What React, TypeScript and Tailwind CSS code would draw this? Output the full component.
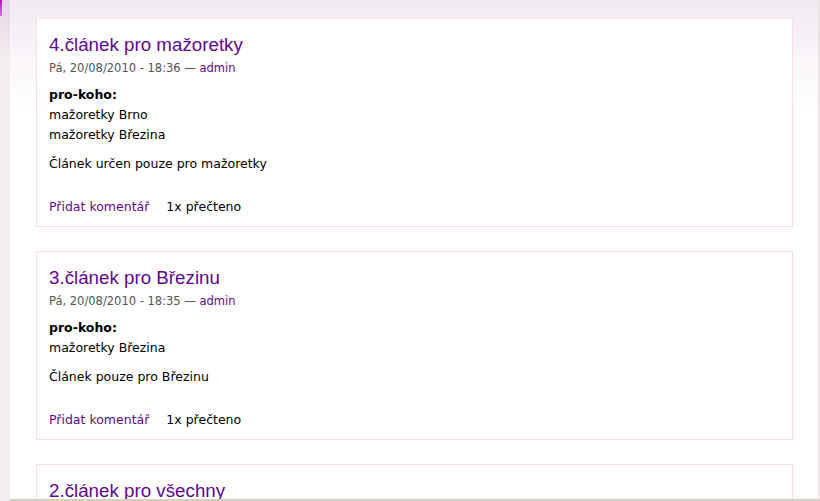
import React from 'react';

type Article = {
  title: string;
  date: string;
  groups: string[];
  body: string;
};

const articles: Article[] = [
  {
    title: '4.článek pro mažoretky',
    date: 'Pá, 20/08/2010 - 18:36',
    groups: ['mažoretky Brno', 'mažoretky Březina'],
    body: 'Článek určen pouze pro mažoretky',
  },
  {
    title: '3.článek pro Březinu',
    date: 'Pá, 20/08/2010 - 18:35',
    groups: ['mažoretky Březina'],
    body: 'Článek pouze pro Březinu',
  },
  {
    title: '2.článek pro všechny',
    date: 'Pá, 20/08/2010 - 18:34',
    groups: ['mažoretky Brno', 'mažoretky Březina'],
    body: 'Článek pro všechny',
  },
];

function Node({ article }: { article: Article }) {
  return (
    <div className="mb-[24px] border border-[#f7e0e3] bg-white px-[12px] pt-[14px] pb-[9px]">
      <h2 className="text-[18.75px] leading-[24px] text-[#62078f] [font-family:'Liberation_Sans',Arial,sans-serif]">
        {article.title}
      </h2>
      <div className="mt-[3px] text-[11.5px] leading-[16px] text-[#555] [font-family:'DejaVu_Sans',Verdana,sans-serif]">
        {article.date} — <span className="text-[#62078f]">admin</span>
      </div>
      <div className="mt-[9px] text-[12.5px] leading-[20px] text-black [font-family:'DejaVu_Sans',Verdana,sans-serif]">
        <div className="font-bold">pro-koho:</div>
        {article.groups.map((g) => (
          <div key={g}>{g}</div>
        ))}
        <p className="mt-[9px]">{article.body}</p>
        <div className="mt-[23px] flex gap-[17px]">
          <span className="text-[#62078f]">Přidat komentář</span>
          <span>1x přečteno</span>
        </div>
      </div>
    </div>
  );
}

export default function App() {
  return (
    <div className="flex h-[501px] w-[820px] overflow-hidden bg-white">
      <div className="relative h-full w-[10px] shrink-0 bg-[#f3eded]">
        <div className="absolute inset-x-0 top-0 h-[60px] bg-gradient-to-b from-[#e6d6e7] to-[#f3eded]" />
        <div className="absolute left-0 top-0 h-[16px] w-[2px] bg-gradient-to-b from-[#b000b8] to-[#d070d8]" />
      </div>
      <div className="flex min-w-0 flex-1 flex-col">
        <div className="flex min-h-0 flex-1 bg-gradient-to-b from-[#f2e9f2] via-[#faf6fa] via-[60px] to-white to-[110px]">
          <div className="min-w-0 flex-1 overflow-hidden pl-[26px] pr-[25px] pt-[18px]">
            {articles.map((a) => (
              <Node key={a.title} article={a} />
            ))}
          </div>
          <div className="w-[2px] shrink-0 bg-[#ece4e4]" />
        </div>
        <div className="h-[2px] shrink-0 bg-[#d6cfc0]" />
      </div>
    </div>
  );
}
